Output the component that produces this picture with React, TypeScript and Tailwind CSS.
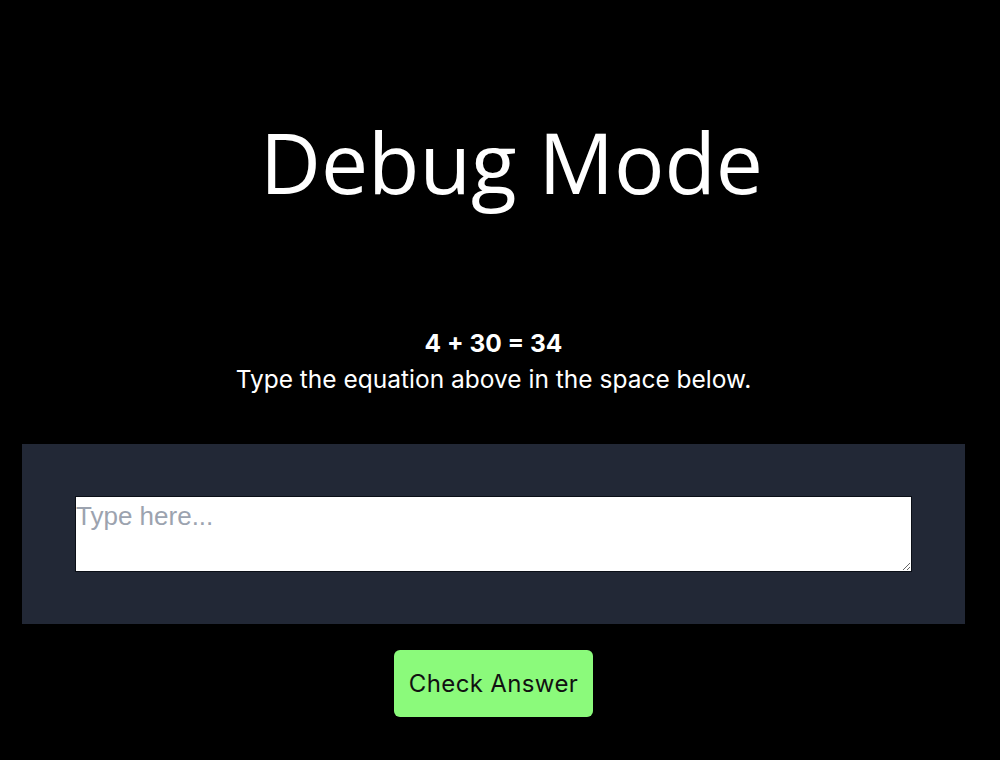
import React from 'react';

export default function App() {
  return (
    <div className="min-h-screen w-full bg-black">
      <div className="flex w-[987px] flex-col items-center">
        <h1 className="mt-[120px] ml-[36px] text-[84px] leading-none font-normal text-white" style={{ fontFamily: '"Open Sans", sans-serif' }}>
          Debug Mode
        </h1>
        <div className="mt-[121px] flex flex-col items-center text-white" style={{ fontFamily: 'Inter, sans-serif' }}>
          <p className="text-[24.5px] leading-[36px] font-bold">4 + 30 = 34</p>
          <p className="text-[24.5px] leading-[36px]">Type the equation above in the space below.</p>
        </div>
        <div className="mt-[47px] w-[943px] bg-[#222836] px-[53px] py-[52px]">
          <textarea
            placeholder="Type here..."
            className="block h-[76px] w-full border border-[#0b0f17] bg-white px-0 pt-[3px] pb-0 text-[26px] leading-tight text-black placeholder:text-[#9ca3af]"
            style={{ fontFamily: '"Liberation Sans", Arial, sans-serif' }}
          />
        </div>
        <button
          className="mt-[26px] h-[67px] w-[199px] rounded-md bg-[#8bfa7b] text-[24px] tracking-[0.015em] text-[#111]"
          style={{ fontFamily: 'Inter, sans-serif' }}
        >
          Check Answer
        </button>
      </div>
    </div>
  );
}
